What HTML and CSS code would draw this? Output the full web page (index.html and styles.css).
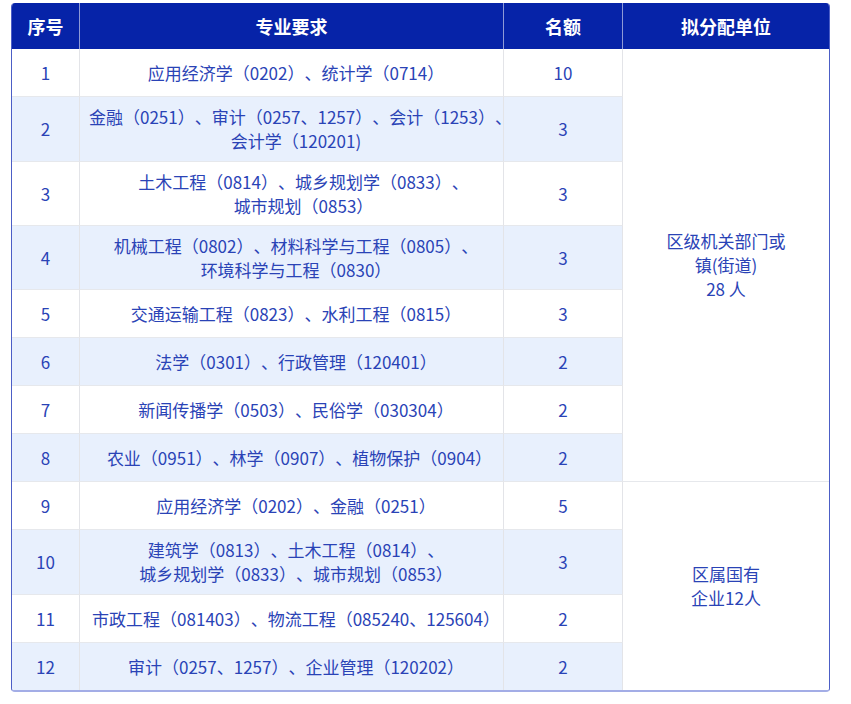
FILE: index.html
```html
<!DOCTYPE html>
<html lang="zh-CN">
<head>
<meta charset="utf-8">
<title>岗位表</title>
<link rel="stylesheet" href="styles.css">
</head>
<body>
<div class="wrap">
<table class="plan">
<colgroup>
<col class="c-no">
<col class="c-major">
<col class="c-count">
<col class="c-unit">
</colgroup>
<thead>
<tr><th>序号</th><th>专业要求</th><th>名额</th><th class="last">拟分配单位</th></tr>
</thead>
<tbody>
<tr><td>1</td><td class="major">应用经济学（0202）、统计学（0714）</td><td>10</td><td class="unit last" rowspan="8">区级机关部门或<br>镇(街道)<br>28 人</td></tr>
<tr class="alt"><td>2</td><td class="major">金融（0251）、审计（0257、1257）、会计（1253）、<br>会计学（120201)</td><td>3</td></tr>
<tr class="tight"><td>3</td><td class="major wide-shift">土木工程（0814）、城乡规划学（0833）、<br>城市规划（0853）</td><td>3</td></tr>
<tr class="alt tight"><td>4</td><td class="major">机械工程（0802）、材料科学与工程（0805）、<br>环境科学与工程（0830）</td><td>3</td></tr>
<tr><td>5</td><td class="major">交通运输工程（0823）、水利工程（0815）</td><td>3</td></tr>
<tr class="alt"><td>6</td><td class="major">法学（0301）、行政管理（120401）</td><td>2</td></tr>
<tr><td>7</td><td class="major">新闻传播学（0503）、民俗学（030304）</td><td>2</td></tr>
<tr class="alt"><td>8</td><td class="major mid-shift">农业（0951）、林学（0907）、植物保护（0904）</td><td>2</td></tr>
<tr><td>9</td><td class="major">应用经济学（0202）、金融（0251）</td><td>5</td><td class="unit last end" rowspan="4">区属国有<br>企业12人</td></tr>
<tr class="alt"><td>10</td><td class="major">建筑学（0813）、土木工程（0814）、<br>城乡规划学（0833）、城市规划（0853）</td><td>3</td></tr>
<tr><td>11</td><td class="major">市政工程（081403）、物流工程（085240、125604）</td><td>2</td></tr>
<tr class="alt end"><td>12</td><td class="major">审计（0257、1257）、企业管理（120202）</td><td>2</td></tr>
</tbody>
</table>
</div>
</body>
</html>
```

FILE: styles.css
```css
html, body {
  margin: 0;
  padding: 0;
  background: #ffffff;
}

body {
  padding: 3px 0 0 11px;
  font-family: "Noto Sans CJK SC", "Noto Sans", sans-serif;
}

.wrap {
  width: 817px;
  border-left: 1px solid #4c5ec6;
  border-right: 1px solid #4c5ec6;
  border-bottom: 2px solid #a3ade6;
  border-radius: 4px;
  overflow: hidden;
}

.plan {
  width: 817px;
  border-collapse: separate;
  border-spacing: 0;
  table-layout: fixed;
  text-spacing-trim: space-all;
}

.c-no { width: 68px; }
.c-major { width: 424px; }
.c-count { width: 119px; }
.c-unit { width: 206px; }

.plan th {
  height: 46px;
  padding: 0;
  background: #0623a8;
  color: #ffffff;
  font-size: 18px;
  font-weight: 700;
  text-align: center;
  vertical-align: middle;
  border-right: 1px solid #8e9ad6;
  box-sizing: border-box;
}

.plan th.last {
  border-right: none;
}

.plan td {
  height: 48px;
  padding: 8px 0;
  box-sizing: border-box;
  color: #2a43b6;
  font-size: 17px;
  line-height: 24px;
  text-align: center;
  vertical-align: middle;
  white-space: nowrap;
  background: #ffffff;
  border-right: 1px solid #e3e4e8;
  border-bottom: 1px solid #e6e8ec;
}

.plan td.major {
  padding-left: 9px;
}

.plan td.major.mid-shift {
  padding-left: 16px;
}

.plan td.major.wide-shift {
  padding-left: 24px;
}

.plan tr.tight td {
  padding-bottom: 7px;
}

.plan tr.alt td {
  background: #e8f0fd;
}

.plan td.last {
  border-right: none;
  background: #ffffff;
}

.plan tr.end td,
.plan td.end {
  border-bottom: none;
}

.plan tr.end td {
  height: 47px;
}
```
